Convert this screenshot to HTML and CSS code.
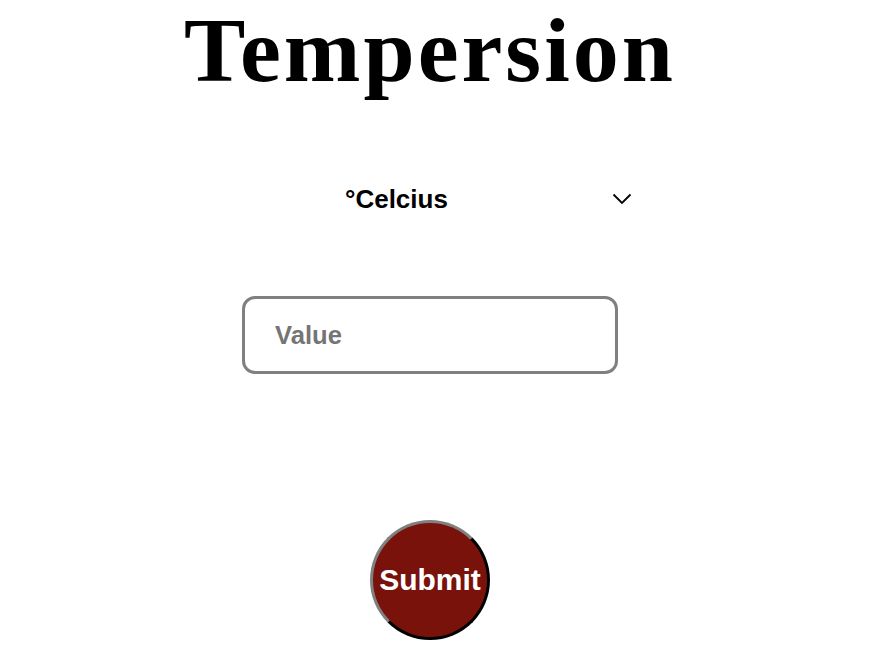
FILE: index.html
```html
<!DOCTYPE html>
<html>
<head>
<meta charset="utf-8">
<link rel="stylesheet" href="styles.css">
</head>
<body>
<main class="page">
  <h1 class="title">Tempersion</h1>
  <div class="unit-select">
    <span class="unit-label">°Celcius</span>
    <svg class="chevron" width="20" height="12" viewBox="0 0 20 12"><path d="M1.5 1.5 L10 10 L18.5 1.5" fill="none" stroke="#000" stroke-width="1.8"/></svg>
  </div>
  <input class="value-input" type="text" placeholder="Value">
  <button class="submit">Submit</button>
</main>
</body>
</html>
```
FILE: styles.css
```css
html, body {
  margin: 0;
  padding: 0;
  background: #fff;
}
.page {
  width: 860px;
  display: flex;
  flex-direction: column;
  align-items: center;
  font-family: "Liberation Sans", Arial, sans-serif;
}
.title {
  font-family: "Liberation Serif", "Times New Roman", serif;
  font-weight: bold;
  font-size: 92px;
  line-height: 100px;
  letter-spacing: 3px;
  margin: 0;
}
.unit-select {
  margin-top: 79px;
  margin-left: 110px;
  width: 310px;
  height: 40px;
  box-sizing: border-box;
  padding: 0 8px 0 15px;
  display: flex;
  align-items: center;
  justify-content: space-between;
}
.unit-label {
  font-size: 26px;
  font-weight: bold;
  color: #000;
}
.chevron {
  display: block;
}
.value-input {
  margin-top: 77px;
  width: 376px;
  height: 78px;
  box-sizing: border-box;
  border: 3px solid #808080;
  border-radius: 13px;
  padding: 0 0 0 30px;
  font-family: "Liberation Sans", Arial, sans-serif;
  font-size: 25.6px;
  font-weight: bold;
  outline: none;
}
.value-input::placeholder {
  color: #757575;
}
.submit {
  margin-top: 146px;
  width: 120px;
  height: 120px;
  border-radius: 50%;
  border: 3px outset #777;
  border-top-color: #808080;
  border-left-color: #808080;
  border-bottom-color: #222;
  border-right-color: #222;
  background: #7a120c;
  color: #fff;
  font-family: "Liberation Sans", Arial, sans-serif;
  font-weight: bold;
  font-size: 30px;
  padding: 0;
}
```
